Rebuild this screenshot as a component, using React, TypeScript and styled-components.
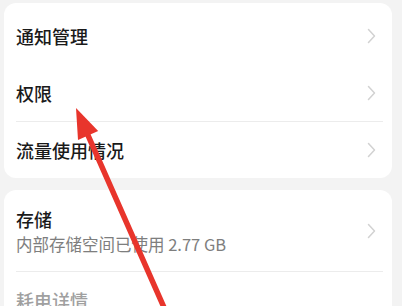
import React from 'react'
import styled, { createGlobalStyle } from 'styled-components'

const GlobalStyle = createGlobalStyle`
  html, body {
    margin: 0;
    padding: 0;
    background: #f3f3f3;
  }
  body {
    font-family: 'Noto Sans CJK SC', 'Noto Sans', sans-serif;
  }
`

const Page = styled.div`
  position: relative;
  width: 402px;
  height: 306px;
  overflow: hidden;
  padding: 3px 10px 0 4px;
  box-sizing: border-box;
  display: flex;
  flex-direction: column;
  gap: 12px;
`

const Card = styled.div<{ $top?: number }>`
  background: #ffffff;
  border-radius: 12px;
  padding-top: ${p => p.$top ?? 0}px;
  display: flex;
  flex-direction: column;
`

const Row = styled.div<{ $height?: number; $divider?: boolean }>`
  height: ${p => p.$height ?? 57}px;
  display: flex;
  align-items: center;
  justify-content: space-between;
  padding: 0 16px 0 12px;
  position: relative;
  &::before {
    content: '';
    display: ${p => (p.$divider ? 'block' : 'none')};
    position: absolute;
    top: 0;
    left: 12px;
    right: 9px;
    height: 1px;
    background: #ececec;
  }
`

const Texts = styled.div`
  display: flex;
  flex-direction: column;
  gap: 3px;
`

const Title = styled.span<{ $muted?: boolean }>`
  font-size: 18px;
  line-height: 24px;
  font-weight: 500;
  color: ${p => (p.$muted ? '#a0a0a0' : '#1a1a1a')};
`

const Sub = styled.span`
  font-size: 16.5px;
  line-height: 20px;
  color: #7e7e7e;
`

const Overlay = styled.svg`
  position: absolute;
  left: 0;
  top: 0;
  pointer-events: none;
`

const Chevron = () => (
  <svg width="9" height="16" viewBox="0 0 9 16">
    <path d="M1.5 1.5 L7.5 8 L1.5 14.5" fill="none" stroke="#d2d2d2" strokeWidth="1.5" strokeLinecap="round" strokeLinejoin="round" />
  </svg>
)

const Arrow = () => {
  const tip = { x: 76, y: 108 }
  const end = { x: 166, y: 312 }
  const dx = end.x - tip.x
  const dy = end.y - tip.y
  const len = Math.hypot(dx, dy)
  const ux = dx / len
  const uy = dy / len
  const headLen = 30
  const headHalf = 11
  const bx = tip.x + ux * headLen
  const by = tip.y + uy * headLen
  const head = `${tip.x},${tip.y} ${bx - uy * headHalf},${by + ux * headHalf} ${bx + uy * headHalf},${by - ux * headHalf}`
  return (
    <Overlay width="402" height="306" viewBox="0 0 402 306">
      <line x1={bx - ux * 4} y1={by - uy * 4} x2={end.x} y2={end.y} stroke="#e8352c" strokeWidth="5.5" strokeLinecap="round" />
      <polygon points={head} fill="#e8352c" />
    </Overlay>
  )
}

export default function App() {
  return (
    <>
      <GlobalStyle />
      <Page>
        <Card $top={4}>
          <Row>
            <Title>通知管理</Title>
            <Chevron />
          </Row>
          <Row>
            <Title>权限</Title>
            <Chevron />
          </Row>
          <Row $divider>
            <Title>流量使用情况</Title>
            <Chevron />
          </Row>
        </Card>
        <Card>
          <Row $height={81}>
            <Texts>
              <Title>存储</Title>
              <Sub>内部存储空间已使用 2.77 GB</Sub>
            </Texts>
            <Chevron />
          </Row>
          <Row $divider>
            <Title $muted>耗电详情</Title>
          </Row>
        </Card>
        <Arrow />
      </Page>
    </>
  )
}
